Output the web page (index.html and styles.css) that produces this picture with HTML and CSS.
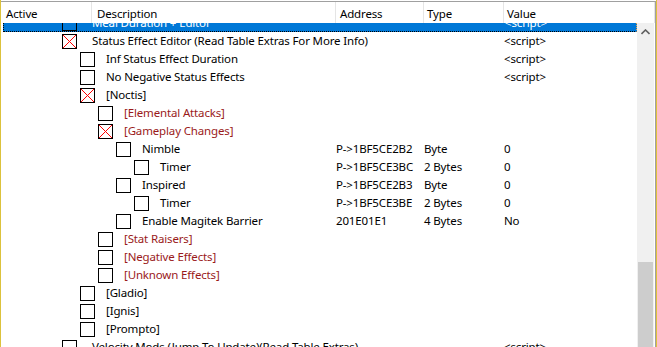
FILE: index.html
```html
<!DOCTYPE html>
<html lang="en">
<head>
  <meta charset="UTF-8">
  <title>Cheat Table</title>
  <link rel="stylesheet" href="styles.css">
</head>
<body>
  <div class="window">
    <!-- HEADER -->
    <div class="header">
      <div class="hcell col-active">Active</div>
      <div class="hcell col-desc">Description</div>
      <div class="hcell col-addr">Address</div>
      <div class="hcell col-type">Type</div>
      <div class="hcell col-value">Value</div>
    </div>

    <div class="body">
      <div class="list">
        <div class="row selected first lvl0">
          <div class="tree"><span class="check"></span><span class="label">Meal Duration + Editor</span></div>
          <div class="cell"></div><div class="cell"></div><div class="cell">&lt;script&gt;</div>
        </div>
        <div class="row lvl0">
          <div class="tree"><span class="check on"><svg viewBox="0 0 13 13"><path d="M0 0L13 13M13 0L0 13"/></svg></span><span class="label">Status Effect Editor (Read Table Extras For More Info)</span></div>
          <div class="cell"></div><div class="cell"></div><div class="cell">&lt;script&gt;</div>
        </div>
        <div class="row lvl1">
          <div class="tree"><span class="check"></span><span class="label">Inf Status Effect Duration</span></div>
          <div class="cell"></div><div class="cell"></div><div class="cell">&lt;script&gt;</div>
        </div>
        <div class="row lvl1">
          <div class="tree"><span class="check"></span><span class="label">No Negative Status Effects</span></div>
          <div class="cell"></div><div class="cell"></div><div class="cell">&lt;script&gt;</div>
        </div>
        <div class="row lvl1">
          <div class="tree"><span class="check on"><svg viewBox="0 0 13 13"><path d="M0 0L13 13M13 0L0 13"/></svg></span><span class="label">[Noctis]</span></div>
          <div class="cell"></div><div class="cell"></div><div class="cell"></div>
        </div>
        <div class="row lvl2 group">
          <div class="tree"><span class="check"></span><span class="label">[Elemental Attacks]</span></div>
          <div class="cell"></div><div class="cell"></div><div class="cell"></div>
        </div>
        <div class="row lvl2 group">
          <div class="tree"><span class="check on"><svg viewBox="0 0 13 13"><path d="M0 0L13 13M13 0L0 13"/></svg></span><span class="label">[Gameplay Changes]</span></div>
          <div class="cell"></div><div class="cell"></div><div class="cell"></div>
        </div>
        <div class="row lvl3">
          <div class="tree"><span class="check"></span><span class="label">Nimble</span></div>
          <div class="cell">P-&gt;1BF5CE2B2</div><div class="cell">Byte</div><div class="cell">0</div>
        </div>
        <div class="row lvl4">
          <div class="tree"><span class="check"></span><span class="label">Timer</span></div>
          <div class="cell">P-&gt;1BF5CE3BC</div><div class="cell">2 Bytes</div><div class="cell">0</div>
        </div>
        <div class="row lvl3">
          <div class="tree"><span class="check"></span><span class="label">Inspired</span></div>
          <div class="cell">P-&gt;1BF5CE2B3</div><div class="cell">Byte</div><div class="cell">0</div>
        </div>
        <div class="row lvl4">
          <div class="tree"><span class="check"></span><span class="label">Timer</span></div>
          <div class="cell">P-&gt;1BF5CE3BE</div><div class="cell">2 Bytes</div><div class="cell">0</div>
        </div>
        <div class="row lvl3">
          <div class="tree"><span class="check"></span><span class="label">Enable Magitek Barrier</span></div>
          <div class="cell">201E01E1</div><div class="cell">4 Bytes</div><div class="cell">No</div>
        </div>
        <div class="row lvl2 group">
          <div class="tree"><span class="check"></span><span class="label">[Stat Raisers]</span></div>
          <div class="cell"></div><div class="cell"></div><div class="cell"></div>
        </div>
        <div class="row lvl2 group">
          <div class="tree"><span class="check"></span><span class="label">[Negative Effects]</span></div>
          <div class="cell"></div><div class="cell"></div><div class="cell"></div>
        </div>
        <div class="row lvl2 group">
          <div class="tree"><span class="check"></span><span class="label">[Unknown Effects]</span></div>
          <div class="cell"></div><div class="cell"></div><div class="cell"></div>
        </div>
        <div class="row lvl1">
          <div class="tree"><span class="check"></span><span class="label">[Gladio]</span></div>
          <div class="cell"></div><div class="cell"></div><div class="cell"></div>
        </div>
        <div class="row lvl1">
          <div class="tree"><span class="check"></span><span class="label">[Ignis]</span></div>
          <div class="cell"></div><div class="cell"></div><div class="cell"></div>
        </div>
        <div class="row lvl1">
          <div class="tree"><span class="check"></span><span class="label">[Prompto]</span></div>
          <div class="cell"></div><div class="cell"></div><div class="cell"></div>
        </div>
        <div class="row lvl0">
          <div class="tree"><span class="check"></span><span class="label">Velocity Mods (Jump To Update)(Read Table Extras)</span></div>
          <div class="cell"></div><div class="cell"></div><div class="cell">&lt;script&gt;</div>
        </div>
      </div>

      <!-- SCROLLBAR -->
      <div class="scrollbar">
        <div class="arrow">
          <svg width="9" height="6" viewBox="0 0 9 6"><path d="M0.5 5L4.5 1L8.5 5" fill="none" stroke="#606060" stroke-width="1.6"/></svg>
        </div>
        <div class="track"></div>
        <div class="thumb"></div>
      </div>
    </div>
  </div>
</body>
</html>
```

FILE: styles.css
```css
* {
  box-sizing: border-box;
  margin: 0;
  padding: 0;
}

body {
  width: 657px;
  height: 347px;
  overflow: hidden;
  background: #ffffff;
  font-family: 'Noto Sans', 'Liberation Sans', sans-serif;
  font-size: 11.5px;
  letter-spacing: -0.15px;
  color: #000;
}

.window {
  height: 347px;
  border-left: 1px solid #dcc23c;
  border-right: 1px solid #dcc23c;
  display: flex;
  flex-direction: column;
  padding-top: 1px;
}

/* Header */
.header {
  display: flex;
  height: 22px;
  border-top: 1px solid #a0a0a0;
  border-right: 1px solid #a0a0a0;
  flex-shrink: 0;
}

.hcell {
  border-right: 1px solid #e5e5e5;
  padding-top: 3px;
  line-height: 18px;
  white-space: nowrap;
}

.col-active { width: 91px; padding-left: 5px; }
.col-desc { width: 244px; padding-left: 5px; }
.col-addr { width: 88px; padding-left: 4px; }
.col-type { width: 80px; padding-left: 3px; }
.col-value { flex: 1; padding-left: 3px; }

/* List body */
.body {
  flex: 1;
  display: flex;
  overflow: hidden;
  border-right: 1px solid #a0a0a0;
  padding-right: 1px;
}

.list {
  flex: 1;
  overflow: hidden;
  padding-left: 2px;
}

.row {
  display: grid;
  grid-template-columns: 332px 88px 80px 1fr;
  height: 18px;
  line-height: 18px;
  white-space: nowrap;
}

.row.first {
  margin-top: -9px;
}

.row.selected {
  background: #0078d7;
  color: #fff;
  border: 1px dotted #000;
  border-right-color: #f7a33c;
  line-height: 16px;
}

.tree {
  display: flex;
  align-items: center;
  overflow: visible;
}

.lvl0 .tree { padding-left: 59px; }
.lvl1 .tree { padding-left: 77px; }
.lvl2 .tree { padding-left: 95px; }
.lvl3 .tree { padding-left: 113px; }
.lvl4 .tree { padding-left: 131px; }

.selected .tree { padding-left: 58px; }

.check {
  width: 15px;
  height: 15px;
  border: 1px solid #000;
  flex-shrink: 0;
  display: block;
}

.check svg {
  display: block;
  width: 13px;
  height: 13px;
}

.check svg path {
  stroke: #ff0000;
  stroke-width: 1;
  fill: none;
}

.label {
  margin-left: 11px;
}

.lvl0 .label {
  margin-left: 15px;
}

.group .label {
  color: #9a1a1a;
}

.cell {
  padding-left: 1px;
}

/* Scrollbar */
.scrollbar {
  width: 17px;
  background: #f0f0f0;
  display: flex;
  flex-direction: column;
  align-items: center;
}

.arrow {
  height: 17px;
  display: flex;
  align-items: center;
  justify-content: center;
  padding-top: 1px;
}

.track {
  height: 222px;
}

.thumb {
  width: 15px;
  flex: 1;
  background: #cdcdcd;
}
```
